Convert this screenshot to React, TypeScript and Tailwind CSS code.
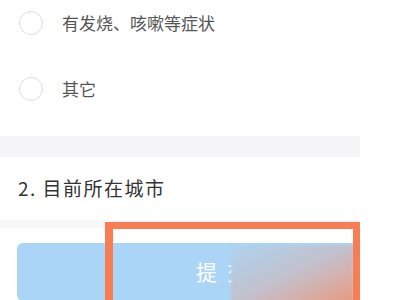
import React from 'react';

const font = { fontFamily: '"Noto Sans CJK SC", "Noto Sans", sans-serif' };

const Option: React.FC<{ label: string }> = ({ label }) => (
  <div className="flex h-[66px] items-center pl-[19px]">
    <div className="h-[24px] w-[24px] rounded-full border-[1.5px] border-[#dedede] bg-white" />
    <span className="ml-[19px] text-[17px] text-[#555555]">{label}</span>
  </div>
);

export default function App() {
  return (
    <div className="relative h-[300px] w-[400px] overflow-hidden bg-white" style={font}>
      <div className="w-[360px]">
        {/* Options */}
        <div className="-mt-[10px]">
          <Option label="有发烧、咳嗽等症状" />
          <Option label="其它" />
        </div>

        <div className="mt-[14px] h-[21px] bg-[#f5f5f8]" />

        {/* Question 2 */}
        <div className="flex h-[63px] items-center pl-[18px]">
          <span className="text-[19px] tracking-[1.5px] text-[#333333]">2. 目前所在城市</span>
        </div>

        <div className="h-[8px] bg-[#f7f7fa]" />

        {/* Submit */}
        <div className="pl-[17px] pt-[15px]">
          <div className="flex h-[58px] items-center rounded-[6px] bg-[#aad5f6] pl-[179px]">
            <span className="text-[21px] tracking-[10px] text-white">提交</span>
          </div>
        </div>
      </div>

      {/* blurred watermark */}
      <div className="absolute left-[231px] top-[245px] h-[60px] w-[122px] bg-gradient-to-br from-[#acd3f1] via-[#c3c0cc] to-[#e8977b] blur-[1px]" />

      {/* highlight frame */}
      <div className="absolute left-[105px] top-[222px] h-[90px] w-[255px] border-[7px] border-l-[8px] border-[#f97d53]" />
    </div>
  );
}
